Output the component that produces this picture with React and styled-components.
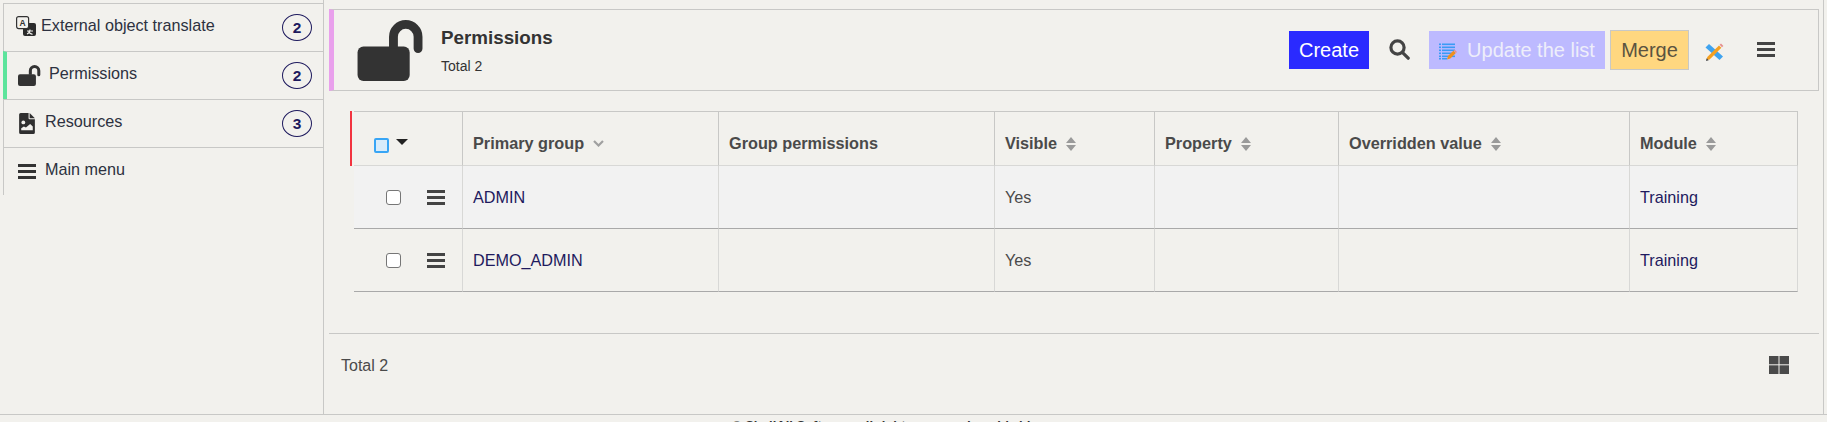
import { Fragment } from "react";
import styled, { createGlobalStyle } from "styled-components";

const GlobalStyle = createGlobalStyle`
  html, body {
    margin: 0;
    height: 100%;
    overflow: hidden;
    background: #f2f1ed;
  }
  body {
    font-family: "Liberation Sans", Arial, sans-serif;
    color: #333;
  }
`;

const Page = styled.div`
  width: 1827px;
  height: 422px;
  overflow: hidden;
  background: #f2f1ed;
`;

const Layout = styled.div`
  display: flex;
  height: 415px;
  border-bottom: 1px solid #c8c8c6;
  box-sizing: border-box;
`;

const Sidebar = styled.nav`
  width: 324px;
  flex: none;
  box-sizing: border-box;
  padding: 3px 0 0 3px;
  border-right: 1px solid #c8c8c6;
`;

const SideItem = styled.div`
  display: flex;
  align-items: center;
  height: 48px;
  box-sizing: border-box;
  border-top: 1px solid #c8c8c6;
  border-left: ${(p) => (p.$active ? "4px solid #5de49c" : "1px solid #c8c8c6")};
  padding-left: ${(p) => p.$pad}px;
  color: #2d3140;
  font-size: 16.2px;
`;

const SideIcon = styled.span`
  display: flex;
  width: ${(p) => p.$w}px;
  flex: none;
  margin-top: ${(p) => p.$mt}px;
`;

const SideLabel = styled.span`
  flex: 1;
  margin-top: -4px;
`;

const Badge = styled.span`
  display: flex;
  align-items: center;
  justify-content: center;
  width: 28px;
  height: 25px;
  margin: 0 11px 0 0;
  border: 1px solid #1e1a5e;
  border-radius: 50%;
  color: #1e1a5e;
  font-size: 15.5px;
  font-weight: bold;
`;

const Main = styled.main`
  flex: 1;
  min-width: 0;
  box-sizing: border-box;
  margin-right: 3px;
  border-right: 1px solid #c8c8c6;
  padding: 9px 4px 0 5px;
  display: flex;
  flex-direction: column;
`;

const Header = styled.header`
  display: flex;
  align-items: center;
  height: 82px;
  flex: none;
  box-sizing: border-box;
  border: 1px solid #c8c8c6;
  border-left: 5px solid #e9a0ec;
  padding: 0 43px 0 23px;
`;

const HeaderTitles = styled.div`
  flex: 1;
  margin-left: 16px;
`;

const Title = styled.div`
  font-size: 18.8px;
  font-weight: bold;
  color: #333;
  margin-top: 1px;
`;

const SubTitle = styled.div`
  font-size: 14px;
  margin-top: 9px;
  color: #333;
`;

const Actions = styled.div`
  display: flex;
  align-items: center;
`;

const ActionButton = styled.div`
  display: flex;
  align-items: center;
  justify-content: center;
  gap: 10px;
  height: ${(p) => (p.$merge ? 40 : 38)}px;
  width: ${(p) => p.$w}px;
  box-sizing: border-box;
  margin-left: ${(p) => p.$ml || 0}px;
  font-size: 20px;
  background: ${(p) => p.$bg};
  color: ${(p) => p.$color};
  border: ${(p) => (p.$merge ? "1px solid #c8c8c6" : "none")};
  svg {
    margin-top: 3px;
  }
`;

const IconSlot = styled.span`
  display: flex;
  margin-left: ${(p) => p.$ml}px;
  margin-top: ${(p) => p.$mt || 0}px;
`;

const TableWrap = styled.div`
  margin: 20px 15px 0 21px;
  border-left: 2px solid transparent;
`;

const Grid = styled.div`
  display: grid;
  grid-template-columns: 109px 256px 276px 160px 184px 291px 168px;
  margin-left: 2px;
`;

const HeadCell = styled.div`
  display: flex;
  align-items: center;
  gap: 9px;
  height: 55px;
  box-sizing: border-box;
  padding: 10px 0 0 10px;
  border-top: 1px solid #c8c8c6;
  border-bottom: 1px solid #d8d8d6;
  border-right: 1px solid #c8c8c6;
  font-size: 16.25px;
  font-weight: bold;
  color: #4a4a4a;
`;

const SelectHead = styled(HeadCell)`
  position: relative;
  padding: 8px 0 0 20px;
  gap: 7px;
  &::before {
    content: "";
    position: absolute;
    left: -4px;
    top: -1px;
    bottom: -1px;
    width: 2px;
    background: #f2333f;
  }
`;

const RowCell = styled.div`
  display: flex;
  align-items: center;
  height: 63px;
  box-sizing: border-box;
  padding: 0 0 0 10px;
  border-bottom: 1px solid #a9a9a9;
  border-right: 1px solid #d8d8d6;
  font-size: 16.2px;
  color: ${(p) => p.$color || "#4a4a4a"};
  background: ${(p) => (p.$shade ? "#f2f2f2" : "transparent")};
`;

const SelectCell = styled(RowCell)`
  padding: 0 0 0 32px;
  gap: 26px;
`;

const HeadBox = styled.span`
  width: 11px;
  height: 11px;
  margin-top: 5px;
  border: 2px solid #38a5f5;
  border-radius: 2px;
  background: #d8ecfb;
`;

const RowBox = styled.span`
  width: 13px;
  height: 13px;
  flex: none;
  border: 1px solid #767676;
  border-radius: 3px;
  background: #fff;
`;

const Caret = styled.span`
  width: 0;
  height: 0;
  margin-top: -2px;
  border-left: 6px solid transparent;
  border-right: 6px solid transparent;
  border-top: 6px solid #222;
`;

const Footer = styled.div`
  display: flex;
  align-items: center;
  justify-content: space-between;
  height: 81px;
  box-sizing: border-box;
  margin-top: 41px;
  padding: 0 30px 18px 12px;
  border-top: 1px solid #c8c8c6;
  font-size: 16px;
  color: #4a4a4a;
`;

const TotalText = styled.span`
  margin-top: 2px;
`;

const Copyright = styled.div`
  padding: 3px 0 0 732px;
  font-size: 13px;
  font-weight: bold;
  line-height: 15px;
  color: #333;
  white-space: nowrap;
`;

const BarsIcon = ({ size = 18, color = "#333" }) => (
  <svg width={size} height={size} viewBox="0 0 18 18" fill={color}>
    <rect x="0" y="2" width="18" height="3" />
    <rect x="0" y="8" width="18" height="3" />
    <rect x="0" y="14" width="18" height="3" />
  </svg>
);

const LockIcon = ({ w, h }) => (
  <svg width={w} height={h} viewBox="0 0 68 62" fill="#333">
    <rect x="0" y="27" width="53" height="35" rx="6" />
    <path d="M32 29V17a17 17 0 0 1 34 0v12a4.5 4.5 0 0 1-9 0V17a8 8 0 0 0-16 0v12z" />
  </svg>
);

const TranslateIcon = () => (
  <svg width="20" height="20" viewBox="0 0 20 20">
    <rect x="7" y="7" width="13" height="13" rx="2" fill="#2b2b2b" />
    <rect x="0.6" y="0.6" width="12" height="12" rx="2" fill="#f2f1ed" stroke="#333" strokeWidth="1.2" />
    <text x="6.6" y="10" fontSize="8.5" fontWeight="bold" fill="#333" textAnchor="middle" fontFamily="Liberation Sans">A</text>
    <path d="M11 15h6M14 13.5c0 2-1.5 4-3 4.6M12.5 15c.6 1.6 2.2 3 4 3.4" stroke="#f2f1ed" strokeWidth="1.1" fill="none" />
  </svg>
);

const FileImageIcon = () => (
  <svg width="16" height="21" viewBox="0 0 15 20">
    <path d="M1.5 0H9v5a1 1 0 0 0 1 1h5v12.5a1.5 1.5 0 0 1-1.5 1.5h-12A1.5 1.5 0 0 1 0 18.5v-17A1.5 1.5 0 0 1 1.5 0z" fill="#2f2f2f" />
    <path d="M10 0l5 5h-5z" fill="#2f2f2f" />
    <circle cx="4" cy="9" r="1.8" fill="#f2f1ed" />
    <path d="M2 16.5v-2l2.5-1.6 2 1 4-3.4 2.5 2.4v3.6z" fill="#f2f1ed" />
  </svg>
);

const SearchIcon = () => (
  <svg width="21" height="21" viewBox="0 0 21 21" fill="none" stroke="#444" strokeWidth="3.2" strokeLinecap="round">
    <circle cx="8.5" cy="8.5" r="6.6" />
    <path d="M13.6 13.6l5.6 5.6" />
  </svg>
);

const ListPencilIcon = () => (
  <svg width="18" height="19" viewBox="0 0 18 18">
    <g fill="#3a9bf5">
      {[1, 4, 7, 10, 13].map((y) => (
        <g key={y}>
          <rect x="0" y={y} width="2" height="1.6" />
          <rect x="3" y={y} width="13" height="1.6" />
        </g>
      ))}
      <rect x="0" y="15.5" width="2" height="1.5" />
      <rect x="3" y="15.5" width="5" height="1.5" />
    </g>
    <path d="M8 17l1-3.4 5.4-5.4 2.4 2.4-5.4 5.4z" fill="#f0901e" />
    <path d="M14.6 8l1-1 2.4 2.4-1 1z" fill="#e58f8f" />
  </svg>
);

const RulerPencilIcon = () => (
  <svg width="19" height="18" viewBox="0 0 19 18">
    <path d="M0.5 4.5l3.5-3.5 14 12.5-3.5 3.5z" fill="#3fa3ef" />
    <path d="M1.5 17l.8-3L14 2.4l2.4 2.4L4.6 16.4z" fill="#f5a020" />
    <path d="M14.6 1.8l1.4-1.3 2.4 2.4-1.4 1.3z" fill="#e58f8f" />
    <path d="M1 18l.7-2.8 2 2z" fill="#444" />
  </svg>
);

const SortIcon = () => (
  <svg width="10" height="14" viewBox="0 0 10 14" fill="#9a9a9a">
    <path d="M5 0l5 6H0zM5 14L0 8h10z" />
  </svg>
);

const ChevronIcon = () => (
  <svg width="11" height="7" viewBox="0 0 11 7" fill="none" stroke="#a0a0a0" strokeWidth="2.2">
    <path d="M1 1l4.5 4.5L10 1" />
  </svg>
);

const GridIcon = () => (
  <svg width="20" height="18" viewBox="0 0 20 18" fill="#4a4a4a">
    <rect x="0" y="0" width="9.5" height="8.3" />
    <rect x="10.5" y="0" width="9.5" height="8.3" />
    <rect x="0" y="9.3" width="9.5" height="8.7" />
    <rect x="10.5" y="9.3" width="9.5" height="8.7" />
  </svg>
);

const sideItems = [
  { label: "External object translate", count: 2, pad: 12, w: 25, mt: -4, icon: <TranslateIcon /> },
  { label: "Permissions", count: 2, pad: 11, w: 31, mt: -1, icon: <LockIcon w={23} h={21} />, active: true },
  { label: "Resources", count: 3, pad: 15, w: 26, mt: -1, icon: <FileImageIcon /> },
  { label: "Main menu", pad: 14, w: 27, mt: -1, icon: <BarsIcon /> },
];

const columns = [
  { label: "Primary group", icon: <ChevronIcon /> },
  { label: "Group permissions" },
  { label: "Visible", icon: <SortIcon /> },
  { label: "Property", icon: <SortIcon /> },
  { label: "Overridden value", icon: <SortIcon /> },
  { label: "Module", icon: <SortIcon /> },
];

const rows = ["ADMIN", "DEMO_ADMIN"];

const App = () => (
  <Page>
    <GlobalStyle />
    <Layout>
      <Sidebar>
        {sideItems.map((item) => (
          <SideItem key={item.label} $active={item.active} $pad={item.pad}>
            <SideIcon $w={item.w} $mt={item.mt}>{item.icon}</SideIcon>
            <SideLabel>{item.label}</SideLabel>
            {item.count && <Badge>{item.count}</Badge>}
          </SideItem>
        ))}
      </Sidebar>
      <Main>
        <Header>
          <LockIcon w={68} h={61} />
          <HeaderTitles>
            <Title>Permissions</Title>
            <SubTitle>Total 2</SubTitle>
          </HeaderTitles>
          <Actions>
            <ActionButton $w={80} $bg="#2a2aff" $color="#fff">Create</ActionButton>
            <IconSlot $ml={20} $mt={-2}><SearchIcon /></IconSlot>
            <ActionButton $w={176} $ml={19} $bg="#bdbaff" $color="#eeeefa">
              <ListPencilIcon />
              Update the list
            </ActionButton>
            <ActionButton $w={79} $ml={5} $merge $bg="#ffd780" $color="#5b5340">Merge</ActionButton>
            <IconSlot $ml={16} $mt={3}><RulerPencilIcon /></IconSlot>
            <IconSlot $ml={33} $mt={-2}><BarsIcon color="#444" /></IconSlot>
          </Actions>
        </Header>
        <TableWrap>
          <Grid>
            <SelectHead>
              <HeadBox />
              <Caret />
            </SelectHead>
            {columns.map((col) => (
              <HeadCell key={col.label}>
                {col.label}
                {col.icon}
              </HeadCell>
            ))}
            {rows.map((name, i) => (
              <Fragment key={name}>
                <SelectCell $shade={i === 0}>
                  <RowBox />
                  <BarsIcon color="#444" />
                </SelectCell>
                <RowCell $shade={i === 0} $color="#1e1a5e">{name}</RowCell>
                <RowCell $shade={i === 0} />
                <RowCell $shade={i === 0}>Yes</RowCell>
                <RowCell $shade={i === 0} />
                <RowCell $shade={i === 0} />
                <RowCell $shade={i === 0} $color="#1e1a5e">Training</RowCell>
              </Fragment>
            ))}
          </Grid>
        </TableWrap>
        <Footer>
          <TotalText>Total 2</TotalText>
          <GridIcon />
        </Footer>
      </Main>
    </Layout>
    <Copyright>© ShellAll Software, all rights reserved worldwide</Copyright>
  </Page>
);

export default App;
